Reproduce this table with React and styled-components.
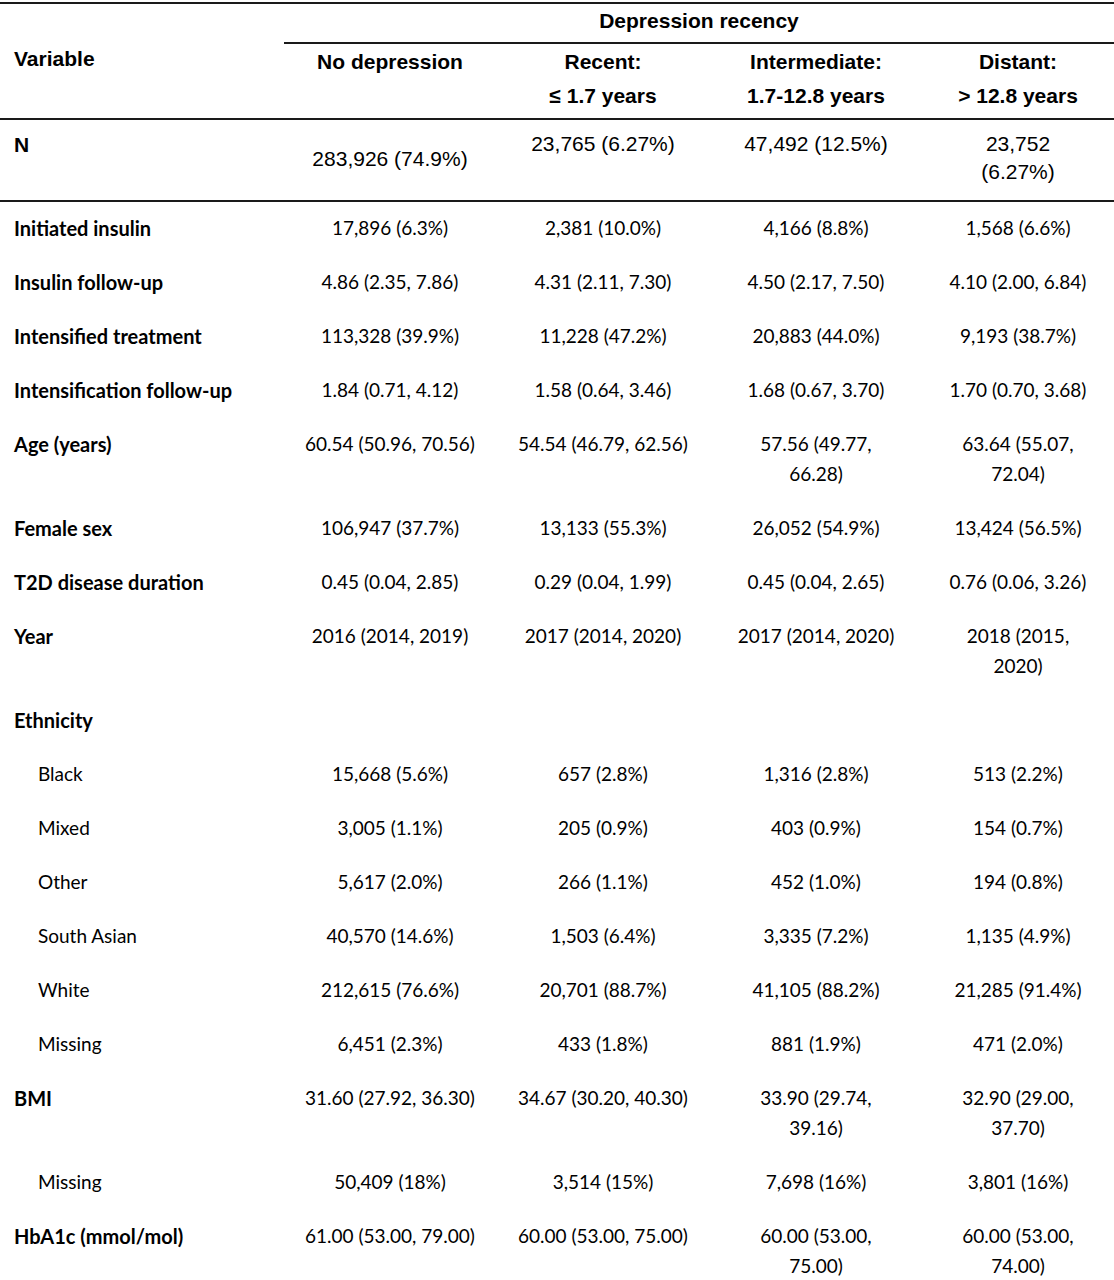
import React from 'react'
import styled, { createGlobalStyle } from 'styled-components'

const GlobalStyle = createGlobalStyle`
  html, body {
    margin: 0;
    padding: 0;
    background: #ffffff;
  }
`

const rows = [
  { label: 'Initiated insulin', values: ['17,896 (6.3%)', '2,381 (10.0%)', '4,166 (8.8%)', '1,568 (6.6%)'] },
  { label: 'Insulin follow-up', values: ['4.86 (2.35, 7.86)', '4.31 (2.11, 7.30)', '4.50 (2.17, 7.50)', '4.10 (2.00, 6.84)'] },
  { label: 'Intensified treatment', values: ['113,328 (39.9%)', '11,228 (47.2%)', '20,883 (44.0%)', '9,193 (38.7%)'] },
  { label: 'Intensification follow-up', values: ['1.84 (0.71, 4.12)', '1.58 (0.64, 3.46)', '1.68 (0.67, 3.70)', '1.70 (0.70, 3.68)'] },
  { label: 'Age (years)', values: ['60.54 (50.96, 70.56)', '54.54 (46.79, 62.56)', ['57.56 (49.77,', '66.28)'], ['63.64 (55.07,', '72.04)']] },
  { label: 'Female sex', values: ['106,947 (37.7%)', '13,133 (55.3%)', '26,052 (54.9%)', '13,424 (56.5%)'] },
  { label: 'T2D disease duration', values: ['0.45 (0.04, 2.85)', '0.29 (0.04, 1.99)', '0.45 (0.04, 2.65)', '0.76 (0.06, 3.26)'] },
  { label: 'Year', values: ['2016 (2014, 2019)', '2017 (2014, 2020)', '2017 (2014, 2020)', ['2018 (2015,', '2020)']] },
  { label: 'Ethnicity', values: ['', '', '', ''] },
  { label: 'Black', sub: true, values: ['15,668 (5.6%)', '657 (2.8%)', '1,316 (2.8%)', '513 (2.2%)'] },
  { label: 'Mixed', sub: true, values: ['3,005 (1.1%)', '205 (0.9%)', '403 (0.9%)', '154 (0.7%)'] },
  { label: 'Other', sub: true, values: ['5,617 (2.0%)', '266 (1.1%)', '452 (1.0%)', '194 (0.8%)'] },
  { label: 'South Asian', sub: true, values: ['40,570 (14.6%)', '1,503 (6.4%)', '3,335 (7.2%)', '1,135 (4.9%)'] },
  { label: 'White', sub: true, values: ['212,615 (76.6%)', '20,701 (88.7%)', '41,105 (88.2%)', '21,285 (91.4%)'] },
  { label: 'Missing', sub: true, values: ['6,451 (2.3%)', '433 (1.8%)', '881 (1.9%)', '471 (2.0%)'] },
  { label: 'BMI', values: ['31.60 (27.92, 36.30)', '34.67 (30.20, 40.30)', ['33.90 (29.74,', '39.16)'], ['32.90 (29.00,', '37.70)']] },
  { label: 'Missing', sub: true, values: ['50,409 (18%)', '3,514 (15%)', '7,698 (16%)', '3,801 (16%)'] },
  { label: 'HbA1c (mmol/mol)', values: ['61.00 (53.00, 79.00)', '60.00 (53.00, 75.00)', ['60.00 (53.00,', '75.00)'], ['60.00 (53.00,', '74.00)']] },
]

const Lines = ({ value }) =>
  (Array.isArray(value) ? value : [value]).map((line, i) => <div key={i}>{line}</div>)

const App = () => {
  return (
    <>
      <GlobalStyle />
      <Page>
        <Table>
          <VariableHead>Variable</VariableHead>
          <GroupHead>Depression recency</GroupHead>
          <SubHead>No depression</SubHead>
          <SubHead>Recent:<br />≤ 1.7 years</SubHead>
          <SubHead>Intermediate:<br />1.7-12.8 years</SubHead>
          <SubHead>Distant:<br />&gt; 12.8 years</SubHead>

          <CountLabel>N</CountLabel>
          <CountCell $middle>283,926 (74.9%)</CountCell>
          <CountCell>23,765 (6.27%)</CountCell>
          <CountCell>47,492 (12.5%)</CountCell>
          <CountCell><Lines value={['23,752', '(6.27%)']} /></CountCell>

          {rows.map((row, r) => (
            <React.Fragment key={r}>
              <Label $sub={row.sub}>{row.label}</Label>
              {row.values.map((v, c) => (
                <Value key={c}><Lines value={v} /></Value>
              ))}
            </React.Fragment>
          ))}
        </Table>
      </Page>
    </>
  )
}

export default App

const Page = styled.div`
  width: 1114px;
  padding-top: 2px;
  color: #000;
`

const Table = styled.div`
  display: grid;
  grid-template-columns: 284px 212px 214px 212px 192px;
  border-top: 2px solid #1a1a1a;
`

const HeadText = styled.div`
  font-family: 'Liberation Sans', Arial, sans-serif;
  font-weight: 700;
  font-size: 21px;
  line-height: 34px;
`

const VariableHead = styled(HeadText)`
  grid-row: span 2;
  display: flex;
  align-items: center;
  padding: 0 0 4px 14px;
  border-bottom: 2px solid #1a1a1a;
`

const GroupHead = styled(HeadText)`
  grid-column: 2 / 6;
  text-align: center;
  padding: 0 0 4px;
  border-bottom: 2px solid #1a1a1a;
`

const SubHead = styled(HeadText)`
  text-align: center;
  white-space: nowrap;
  padding: 1px 0 5px;
  border-bottom: 2px solid #1a1a1a;
`

const CountCell = styled.div`
  font-family: 'Liberation Sans', Arial, sans-serif;
  font-size: 21px;
  line-height: 28px;
  text-align: center;
  white-space: nowrap;
  padding: 10px 0 14px;
  border-bottom: 2px solid #1a1a1a;
  display: flex;
  flex-direction: column;
  justify-content: ${(p) => (p.$middle ? 'center' : 'flex-start')};
  padding-top: ${(p) => (p.$middle ? '12px' : '10px')};
`

const CountLabel = styled(CountCell)`
  font-weight: 700;
  text-align: left;
  padding-left: 14px;
  padding-top: 11px;
`

const BodyText = styled.div`
  font-family: Lato, 'Open Sans', sans-serif;
  font-size: 19px;
  line-height: 30px;
  padding: 11px 0 13px;
  white-space: nowrap;
`

const Label = styled(BodyText)`
  padding-left: ${(p) => (p.$sub ? '38px' : '14px')};
  font-weight: ${(p) => (p.$sub ? 400 : 700)};
  font-size: ${(p) => (p.$sub ? '19px' : '20px')};
`

const Value = styled(BodyText)`
  text-align: center;
`
